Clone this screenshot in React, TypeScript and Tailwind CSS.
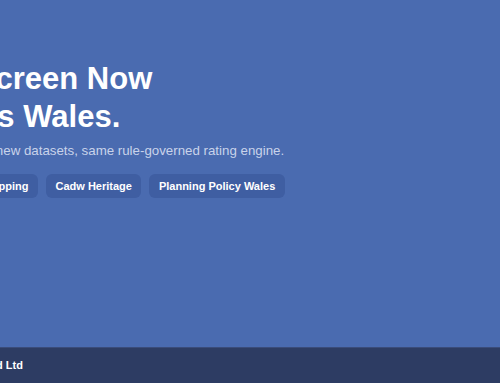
const links = ['Flood Risk Mapping', 'Cadw Heritage', 'Planning Policy Wales']

export default function App() {
  return (
    <div className="h-screen w-full overflow-hidden flex flex-col bg-[#4a6bb0] font-['Liberation_Sans',Arial,sans-serif]">
      <main className="flex-1">
        <div className="-ml-[85.5px] pt-[60px]">
          <h1 className="text-[31px] leading-[38px] font-bold text-white">
            <span className="block">Pre-Screen Now</span>
            <span className="block -ml-[5px]">Covers Wales.</span>
          </h1>
          <p className="mt-[5px] ml-[3.5px] text-[13.3px] leading-5 text-[#c9d3ea] whitespace-nowrap">
            Wales: three new datasets, same rule-governed rating engine.
          </p>
          <div className="mt-[13px] flex gap-2">
            {links.map(l => (
              <span
                key={l}
                className="rounded-md bg-[#3f5ea2] px-[9.5px] py-1 text-[11px] leading-4 font-bold text-white whitespace-nowrap"
              >
                {l}
              </span>
            ))}
          </div>
        </div>
      </main>
      <footer className="h-9 shrink-0 flex items-center bg-[#2d3c63] border-t border-[#3a4c7a]">
        <div className="-ml-[85.5px] text-[11px] font-bold text-white whitespace-nowrap">
          © 2025 Siteworld Ltd
        </div>
      </footer>
    </div>
  )
}
